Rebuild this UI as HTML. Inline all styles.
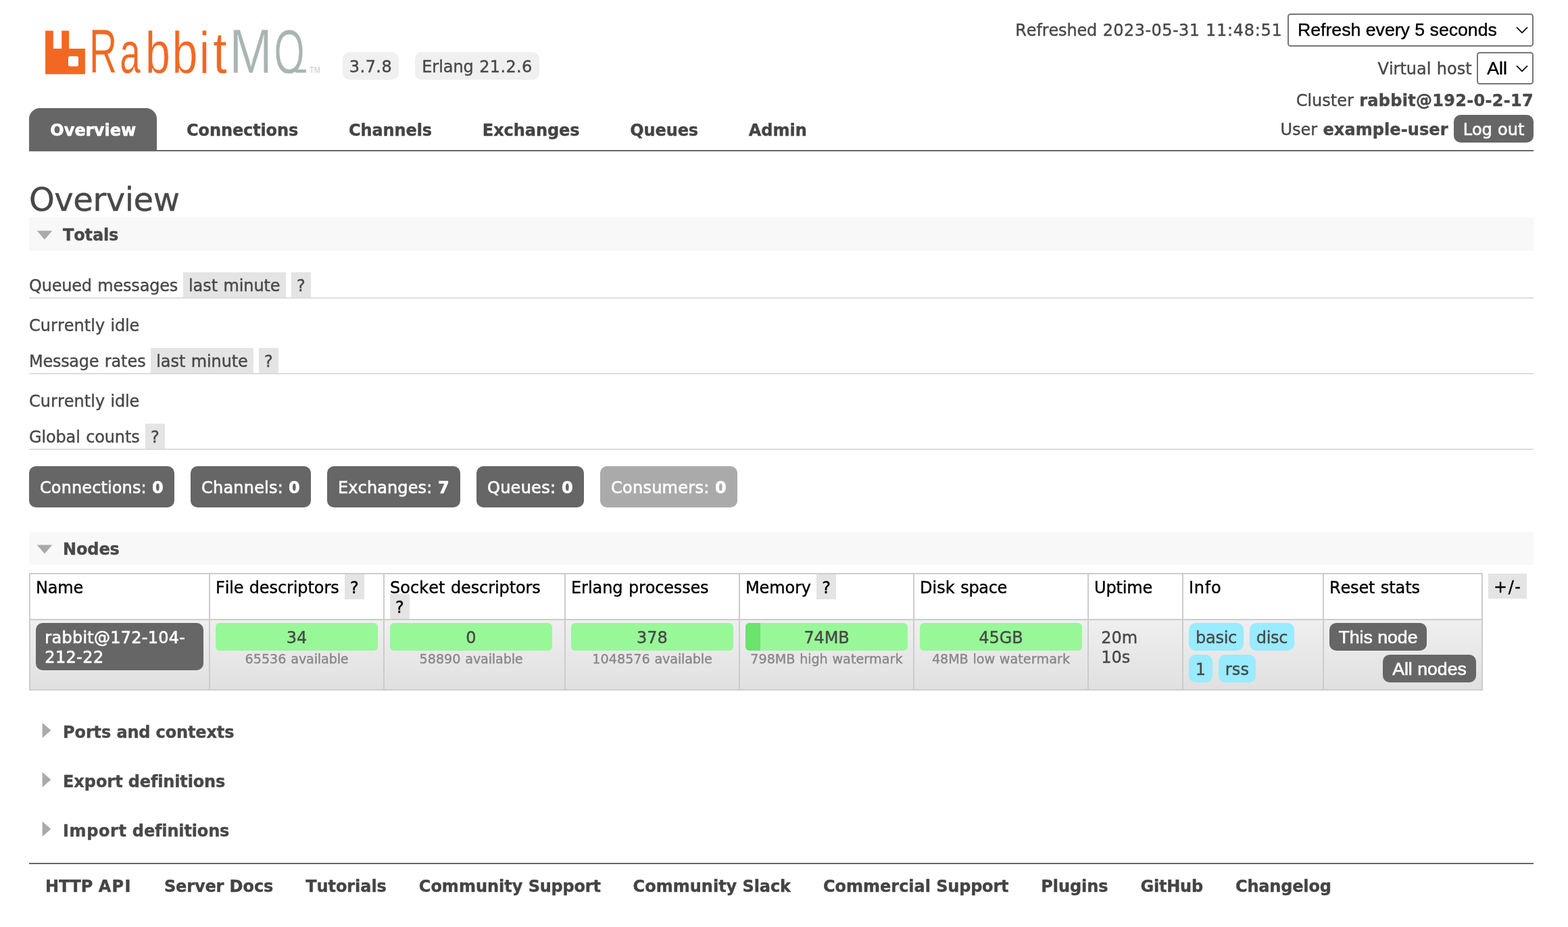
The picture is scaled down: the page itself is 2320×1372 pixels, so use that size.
<!DOCTYPE html>
<html lang="en">
<head>
<meta charset="utf-8">
<title>RabbitMQ Management</title>
<style>
html,body{margin:0;padding:0;background:#fff;}
body{font:24px/30px "DejaVu Sans","Liberation Sans",sans-serif;color:#484848;width:2320px;height:1372px;overflow:hidden;position:relative;will-change:transform;font-kerning:none;font-variant-ligatures:none;}
header,nav,main,footer,section{margin:0;padding:0;display:block;position:static;}
div,span,a,abbr,b,i,svg,h1,h2,h3,p,button{position:absolute;display:block;margin:0;padding:0;border:0;font-size:24px;text-decoration:none;font-style:normal;}
.t{white-space:pre;font-weight:normal;line-height:30px;color:#484848;-webkit-text-stroke:0.400px;}
.b{font-weight:bold;}
.h{font-family:"Liberation Sans",sans-serif;}
.w{color:#fff;-webkit-text-stroke:0.600px;}
.k{color:#000;}
.n{color:#444;}
.g{color:#888;}
.dk{background:#666;border-radius:10px;}
.dis{background:#aaa;}
.tab{background:#666;border-radius:16px 16px 0 0;}
.q{background:#e4e4e4;}
.ln{background:#ddd;}
.hl{background:#666;}
.sec{background:#f8f8f8;}
.ver{background:#f0f0f0;border-radius:10px;}
.tag{background:#99ebff;border-radius:10px;}
.bar{background:#98f898;border-radius:6px;overflow:hidden;}
.bar i{left:0;top:0;width:22px;height:41px;background:#6ae46a;}
.sel{box-sizing:border-box;border:2px solid #767676;border-radius:4.500px;background:#fff;}
.th{background:#fff;}
.row{background:linear-gradient(#efefef,#e0e0e0);}
.bd{background:#ccc;}
#versions,#topnav,#menu{left:0;top:0;}
em{font-style:normal;}
</style>
</head>
<body>
<header>
<svg id="logo" style="left:60px;top:36px" width="430" height="90" viewBox="0 0 430 90" role="img" aria-label="RabbitMQ">
<defs><clipPath id="qc"><rect x="0" y="0" width="430" height="72.8"/></clipPath></defs>
<path d="M7.100 9.500 H18.800 V35.900 H31.200 V9.500 H42.100 V35.900 H65.900 V73.700 H7.100 Z M43.500 47.300 h10 a2.500 2.500 0 0 1 2.500 2.500 v10 a2.500 2.500 0 0 1 -2.500 2.500 h-10 a2.500 2.500 0 0 1 -2.500 -2.500 v-10 a2.500 2.500 0 0 1 2.500 -2.500 Z" fill="#f26822" fill-rule="evenodd"/>
<text clip-path="url(#qc)" font-family="Liberation Sans, sans-serif" stroke="#fff" stroke-width="0.5" y="71.6"><tspan x="71.9" textLength="41.3" lengthAdjust="spacingAndGlyphs" font-size="92.5" fill="#f26822">R</tspan><tspan x="117.2" textLength="30.7" lengthAdjust="spacingAndGlyphs" font-size="87.3" fill="#f26822">a</tspan><tspan x="154.9" textLength="36.9" lengthAdjust="spacingAndGlyphs" font-size="87.3" fill="#f26822">b</tspan><tspan x="194.4" textLength="37.9" lengthAdjust="spacingAndGlyphs" font-size="87.3" fill="#f26822">b</tspan><tspan x="234.8" textLength="15.3" lengthAdjust="spacingAndGlyphs" font-size="87.3" fill="#f26822">i</tspan><tspan x="255.0" textLength="20.7" lengthAdjust="spacingAndGlyphs" font-size="87.3" fill="#f26822">t</tspan><tspan x="279.6" textLength="63.2" lengthAdjust="spacingAndGlyphs" font-size="92.5" fill="#a9b5b2">M</tspan><tspan x="345.5" textLength="45.0" lengthAdjust="spacingAndGlyphs" font-size="92.5" fill="#a9b5b2">Q</tspan></text>
<rect x="377" y="66.8" width="16" height="4.800" fill="#a9b5b2"/>
<text font-family="Liberation Sans, sans-serif" font-size="13.5" fill="#c3cac8" x="398" y="71.6" textLength="16" lengthAdjust="spacingAndGlyphs">TM</text>
</svg>
<div id="versions">
<abbr class="ver" style="left:507px;top:77px;width:83px;height:41px;">
  <span class="t" style="left:9.87px;top:7px;letter-spacing:0.44px;">3.7.8</span>
</abbr>
<abbr class="ver" style="left:614px;top:77px;width:184px;height:41px;">
  <span class="t" style="left:10.23px;top:7px;word-spacing:0.82px;"><em style="letter-spacing:-0.05px">Erlang</em> <em style="letter-spacing:0.36px">21.2.6</em></span>
</abbr>
</div>
<div id="topnav">
<span class="t" style="left:1502.3px;top:30px;word-spacing:0.82px;"><em style="letter-spacing:-0.15px">Refreshed</em> <em style="letter-spacing:0.44px">2023-05-31</em> <em style="letter-spacing:0.7px">11:48:51</em></span>
<div class="sel" style="left:1905px;top:20px;width:364px;height:49px;">
  <span class="t h" style="left:13px;top:6px;font-size:26.67px;line-height:33px;color:#000;">Refresh every 5 seconds</span>
  <svg style="left:334.75px;top:17px" width="20" height="12" viewBox="0 0 20 12"><path d="M2 1.300 L10 9.300 L18 1.300" fill="none" stroke="#111" stroke-width="1.900"/></svg>
</div>
<span class="t" style="left:2038.5px;top:87px;word-spacing:0.82px;"><em style="letter-spacing:-0.01px">Virtual</em> <em style="letter-spacing:-0.02px">host</em></span>
<div class="sel" style="left:2185px;top:77px;width:84px;height:48px;">
  <span class="t h" style="left:13.3px;top:6px;font-size:26.67px;line-height:33px;color:#000;">All</span>
  <svg style="left:54.75px;top:16.5px" width="20" height="12" viewBox="0 0 20 12"><path d="M2 1.300 L10 9.300 L18 1.300" fill="none" stroke="#111" stroke-width="1.900"/></svg>
</div>
<span class="t" style="left:1917.71px;top:134px;letter-spacing:-0.02px;word-spacing:0.85px;">Cluster </span>
<b class="t b" style="left:2011.19px;top:134px;letter-spacing:0.29px;">rabbit@192-0-2-17</b>
<span class="t" style="left:1894.44px;top:177px;letter-spacing:-0.02px;word-spacing:0.84px;">User </span>
<b class="t b" style="left:1957.51px;top:177px;letter-spacing:0.08px;">example-user</b>
<div class="dk" style="left:2151px;top:170px;width:118px;height:41px;">
  <span class="t w" style="left:13.72px;top:7px;word-spacing:0.82px;"><em style="letter-spacing:-0.14px">Log</em> <em style="letter-spacing:-0.03px">out</em></span>
</div>
</div>
<nav id="menu">
<div class="tab" style="left:43px;top:160px;width:189px;height:62px;">
  <a class="t b w" style="left:31.2px;top:18px;letter-spacing:0.08px;">Overview</a>
</div>
<a class="t b n" style="left:276.1px;top:178px;letter-spacing:-0.12px;">Connections</a>
<a class="t b n" style="left:515.95px;top:178px;letter-spacing:-0.1px;">Channels</a>
<a class="t b n" style="left:713.8px;top:178px;letter-spacing:-0.06px;">Exchanges</a>
<a class="t b n" style="left:932.31px;top:178px;letter-spacing:-0.12px;">Queues</a>
<a class="t b n" style="left:1107.79px;top:178px;">Admin</a>
</nav>
<div class="hl" style="left:43px;top:222px;width:2226px;height:2px;"></div>
</header>
<main>
<h1 class="t" style="left:43px;top:265px;letter-spacing:-0.44px;font-size:48px;line-height:60px;">Overview</h1>
<section>
<div class="sec" style="left:43px;top:322px;width:2226px;height:49px;">
  <svg style="left:11px;top:19.2px" width="24" height="14" viewBox="0 0 24 14"><path d="M0.700 0.600 H23.300 L12 13.400 Z" fill="#aaa"/></svg>
  <h2 class="t b" style="left:50px;top:11px;letter-spacing:-0.13px;">Totals</h2>
</div>
<div style="left:43px;top:403px;width:2226px;height:39px;">
  <h3 class="t" style="left:0px;top:5px;word-spacing:0.82px;"><em style="letter-spacing:-0.21px">Queued</em> <em style="letter-spacing:-0.19px">messages</em></h3>
  <div class="q" style="left:228px;top:0px;width:151.5px;height:37px;">
    <span class="t" style="left:8.01px;top:5px;word-spacing:0.82px;"><em style="letter-spacing:-0.08px">last</em> <em style="letter-spacing:-0.1px">minute</em></span>
  </div>
  <div class="q" style="left:388px;top:0px;width:29px;height:37px;">
    <span class="t" style="left:7.96px;top:5px;letter-spacing:0.33px;">?</span>
  </div>
  <div class="ln" style="left:0px;top:37px;width:2226px;height:2px;"></div>
</div>
<p class="t" style="left:43px;top:467px;word-spacing:0.82px;"><em style="letter-spacing:0.02px">Currently</em> <em style="letter-spacing:-0.23px">idle</em></p>
<div style="left:43px;top:515px;width:2226px;height:39px;">
  <h3 class="t" style="left:0px;top:5px;word-spacing:0.82px;"><em style="letter-spacing:-0.28px">Message</em> <em style="letter-spacing:-0.07px">rates</em></h3>
  <div class="q" style="left:180px;top:0px;width:152px;height:37px;">
    <span class="t" style="left:8.26px;top:5px;word-spacing:0.82px;"><em style="letter-spacing:-0.08px">last</em> <em style="letter-spacing:-0.1px">minute</em></span>
  </div>
  <div class="q" style="left:340px;top:0px;width:29px;height:37px;">
    <span class="t" style="left:7.96px;top:5px;letter-spacing:0.33px;">?</span>
  </div>
  <div class="ln" style="left:0px;top:37px;width:2226px;height:2px;"></div>
</div>
<p class="t" style="left:43px;top:579px;word-spacing:0.82px;"><em style="letter-spacing:0.02px">Currently</em> <em style="letter-spacing:-0.23px">idle</em></p>
<div style="left:43px;top:627px;width:2226px;height:39px;">
  <h3 class="t" style="left:0px;top:5px;word-spacing:0.82px;"><em style="letter-spacing:-0.14px">Global</em> <em style="letter-spacing:-0.13px">counts</em></h3>
  <div class="q" style="left:172px;top:0px;width:29px;height:37px;">
    <span class="t" style="left:7.96px;top:5px;letter-spacing:0.33px;">?</span>
  </div>
  <div class="ln" style="left:0px;top:37px;width:2226px;height:2px;"></div>
</div>
<div class="dk" style="left:43px;top:690px;width:215px;height:61px;">
  <span class="t w" style="left:16px;top:17px;letter-spacing:0.11px;word-spacing:0.71px;">Connections: </span>
  <b class="t b w" style="left:181.94px;top:17px;letter-spacing:0.36px;">0</b>
</div>
<div class="dk" style="left:282px;top:690px;width:178px;height:61px;">
  <span class="t w" style="left:16px;top:17px;letter-spacing:0.21px;word-spacing:0.61px;">Channels: </span>
  <b class="t b w" style="left:144.94px;top:17px;letter-spacing:0.36px;">0</b>
</div>
<div class="dk" style="left:484px;top:690px;width:197px;height:61px;">
  <span class="t w" style="left:16px;top:17px;letter-spacing:0.11px;word-spacing:0.72px;">Exchanges: </span>
  <b class="t b w" style="left:163.94px;top:17px;letter-spacing:0.36px;">7</b>
</div>
<div class="dk" style="left:705px;top:690px;width:159px;height:61px;">
  <span class="t w" style="left:16px;top:17px;letter-spacing:0.26px;word-spacing:0.56px;">Queues: </span>
  <b class="t b w" style="left:125.94px;top:17px;letter-spacing:0.36px;">0</b>
</div>
<div class="dk dis" style="left:888px;top:690px;width:203px;height:61px;">
  <span class="t w" style="left:16px;top:17px;letter-spacing:0.25px;word-spacing:0.57px;">Consumers: </span>
  <b class="t b w" style="left:169.94px;top:17px;letter-spacing:0.36px;">0</b>
</div>
</section>
<section>
<div class="sec" style="left:43px;top:787px;width:2226px;height:49px;">
  <svg style="left:11px;top:19.2px" width="24" height="14" viewBox="0 0 24 14"><path d="M0.700 0.600 H23.300 L12 13.400 Z" fill="#aaa"/></svg>
  <h2 class="t b" style="left:50px;top:11px;letter-spacing:-0.11px;">Nodes</h2>
</div>
<div id="nodes" style="left:43px;top:848px;width:2151px;height:174px;">
  <div class="th" style="left:0px;top:0px;width:2151px;height:70px;"></div>
  <div class="row" style="left:0px;top:70px;width:2151px;height:104px;"></div>
  <div class="bd" style="left:0px;top:0px;width:2px;height:174px;"></div>
  <div class="bd" style="left:266px;top:0px;width:2px;height:174px;"></div>
  <div class="bd" style="left:524px;top:0px;width:2px;height:174px;"></div>
  <div class="bd" style="left:792px;top:0px;width:2px;height:174px;"></div>
  <div class="bd" style="left:1050px;top:0px;width:2px;height:174px;"></div>
  <div class="bd" style="left:1308px;top:0px;width:2px;height:174px;"></div>
  <div class="bd" style="left:1566px;top:0px;width:2px;height:174px;"></div>
  <div class="bd" style="left:1706px;top:0px;width:2px;height:174px;"></div>
  <div class="bd" style="left:1914px;top:0px;width:2px;height:174px;"></div>
  <div class="bd" style="left:2149px;top:0px;width:2px;height:174px;"></div>
  <div class="bd" style="left:0px;top:0px;width:2151px;height:2px;"></div>
  <div class="bd" style="left:0px;top:68px;width:2151px;height:2px;"></div>
  <div class="bd" style="left:0px;top:172px;width:2151px;height:2px;"></div>
  <span class="t k" style="left:10px;top:7px;letter-spacing:-0.2px;">Name</span>
  <span class="t k" style="left:276px;top:7px;word-spacing:0.82px;"><em style="letter-spacing:-0.16px">File</em> <em style="letter-spacing:-0.1px">descriptors</em></span>
  <span class="t k" style="left:534px;top:7px;word-spacing:0.82px;"><em style="letter-spacing:0.04px">Socket</em> <em style="letter-spacing:-0.1px">descriptors</em></span>
  <span class="t k" style="left:802px;top:7px;word-spacing:0.82px;"><em style="letter-spacing:-0.05px">Erlang</em> <em style="letter-spacing:-0.18px">processes</em></span>
  <span class="t k" style="left:1060px;top:7px;letter-spacing:-0.12px;">Memory</span>
  <span class="t k" style="left:1318px;top:7px;word-spacing:0.82px;"><em style="letter-spacing:0.06px">Disk</em> <em style="letter-spacing:-0.34px">space</em></span>
  <span class="t k" style="left:1576px;top:7px;letter-spacing:-0.14px;">Uptime</span>
  <span class="t k" style="left:1716px;top:7px;letter-spacing:0.72px;">Info</span>
  <span class="t k" style="left:1924px;top:7px;word-spacing:0.82px;"><em style="letter-spacing:-0.18px">Reset</em> <em style="letter-spacing:-0.04px">stats</em></span>
  <div class="q" style="left:466.97px;top:2px;width:29.08px;height:37px;">
    <span class="t k" style="left:8px;top:5px;letter-spacing:0.33px;">?</span>
  </div>
  <div class="q" style="left:534px;top:31px;width:29.08px;height:37px;">
    <span class="t k" style="left:8px;top:5px;letter-spacing:0.33px;">?</span>
  </div>
  <div class="q" style="left:1165.36px;top:2px;width:29.08px;height:37px;">
    <span class="t k" style="left:8px;top:5px;letter-spacing:0.33px;">?</span>
  </div>
  <div class="dk" style="left:10px;top:74px;width:248px;height:70px;">
    <span class="t w" style="left:13.3px;top:7px;letter-spacing:0.26px;">rabbit@172-104-</span>
    <span class="t w" style="left:13.3px;top:36px;letter-spacing:0.37px;">212-22</span>
  </div>
  <div class="bar" style="left:276px;top:74px;width:240px;height:41px;">
    <span class="t" style="left:104.74px;top:7px;letter-spacing:-0.01px;">34</span>
  </div>
  <span class="t g" style="left:319.51px;top:116px;word-spacing:0.66px;font-size:19.2px;line-height:24px;">65536 <em style="letter-spacing:-0.16px">available</em></span>
  <div class="bar" style="left:534px;top:74px;width:240px;height:41px;">
    <span class="t" style="left:112.37px;top:7px;letter-spacing:-0.02px;">0</span>
  </div>
  <span class="t g" style="left:577.51px;top:116px;word-spacing:0.66px;font-size:19.2px;line-height:24px;">58890 <em style="letter-spacing:-0.16px">available</em></span>
  <div class="bar" style="left:802px;top:74px;width:240px;height:41px;">
    <span class="t" style="left:97.1px;top:7px;letter-spacing:-0.01px;">378</span>
  </div>
  <span class="t g" style="left:833.3px;top:116px;word-spacing:0.66px;font-size:19.2px;line-height:24px;">1048576 <em style="letter-spacing:-0.16px">available</em></span>
  <div class="bar" style="left:1060px;top:74px;width:240px;height:41px;">
    <i></i>
    <span class="t" style="left:86.39px;top:7px;letter-spacing:-0.12px;">74MB</span>
  </div>
  <span class="t g" style="left:1067.36px;top:116px;word-spacing:0.66px;font-size:19.2px;line-height:24px;"><em style="letter-spacing:-0.07px">798MB</em> <em style="letter-spacing:-0.08px">high</em> <em style="letter-spacing:0.01px">watermark</em></span>
  <div class="bar" style="left:1318px;top:74px;width:240px;height:41px;">
    <span class="t" style="left:87.2px;top:7px;letter-spacing:0px;">45GB</span>
  </div>
  <span class="t g" style="left:1335.92px;top:116px;word-spacing:0.66px;font-size:19.2px;line-height:24px;"><em style="letter-spacing:-0.09px">48MB</em> <em style="letter-spacing:-0.05px">low</em> <em style="letter-spacing:0.01px">watermark</em></span>
  <span class="t" style="left:1586.2px;top:81px;letter-spacing:-0.01px;">20m</span>
  <span class="t" style="left:1586.2px;top:110px;letter-spacing:0px;">10s</span>
  <abbr class="tag" style="left:1716px;top:74px;width:81px;height:41px;">
    <span class="t" style="left:10.02px;top:7px;letter-spacing:-0.27px;">basic</span>
  </abbr>
  <abbr class="tag" style="left:1806px;top:74px;width:66px;height:41px;">
    <span class="t" style="left:9.73px;top:7px;letter-spacing:-0.27px;">disc</span>
  </abbr>
  <abbr class="tag" style="left:1716px;top:121px;width:35px;height:41px;">
    <span class="t" style="left:9.87px;top:7px;letter-spacing:-0.02px;">1</span>
  </abbr>
  <abbr class="tag" style="left:1760px;top:121px;width:55px;height:41px;">
    <span class="t" style="left:9.87px;top:7px;letter-spacing:0.13px;">rss</span>
  </abbr>
  <div class="dk" style="left:1924px;top:74px;width:144px;height:41px;">
    <span class="t h w" style="left:13.46px;top:5px;font-size:26.67px;line-height:33px;">This node</span>
  </div>
  <div class="dk" style="left:2003px;top:121px;width:138px;height:41px;">
    <span class="t h w" style="left:14.16px;top:5px;font-size:26.67px;line-height:33px;">All nodes</span>
  </div>
</div>
<div class="q" style="left:2202px;top:849px;width:57.42px;height:37px;">
  <span class="t k" style="left:8px;top:5px;letter-spacing:1.52px;">+/-</span>
</div>
</section>
<section>
<div style="left:43px;top:1058px;width:2226px;height:49px;">
  <svg style="left:19px;top:11.2px" width="14" height="24" viewBox="0 0 14 24"><path d="M0.600 0.700 V23.300 L13.400 12 Z" fill="#aaa"/></svg>
  <h2 class="t b" style="left:50px;top:11px;word-spacing:-0.15px;"><em style="letter-spacing:-0.1px">Ports</em> <em style="letter-spacing:-0.19px">and</em> <em style="letter-spacing:-0.12px">contexts</em></h2>
</div>
</section>
<section>
<div style="left:43px;top:1131px;width:2226px;height:49px;">
  <svg style="left:19px;top:11.2px" width="14" height="24" viewBox="0 0 14 24"><path d="M0.600 0.700 V23.300 L13.400 12 Z" fill="#aaa"/></svg>
  <h2 class="t b" style="left:50px;top:11px;word-spacing:-0.15px;"><em style="letter-spacing:-0.05px">Export</em> <em style="letter-spacing:-0.15px">definitions</em></h2>
</div>
</section>
<section>
<div style="left:43px;top:1204px;width:2226px;height:49px;">
  <svg style="left:19px;top:11.2px" width="14" height="24" viewBox="0 0 14 24"><path d="M0.600 0.700 V23.300 L13.400 12 Z" fill="#aaa"/></svg>
  <h2 class="t b" style="left:50px;top:11px;word-spacing:-0.15px;"><em style="letter-spacing:0.62px">Import</em> <em style="letter-spacing:-0.15px">definitions</em></h2>
</div>
</section>
</main>
<footer>
<div class="hl" style="left:43px;top:1277px;width:2226px;height:2px;"></div>
<a class="t b n" style="left:67px;top:1297px;word-spacing:-0.15px;">HTTP <em style="letter-spacing:1.41px">API</em></a>
<a class="t b n" style="left:242.94px;top:1297px;word-spacing:-0.15px;"><em style="letter-spacing:-0.13px">Server</em> <em style="letter-spacing:-0.04px">Docs</em></a>
<a class="t b n" style="left:452.27px;top:1297px;letter-spacing:-0.08px;">Tutorials</a>
<a class="t b n" style="left:619.77px;top:1297px;word-spacing:-0.15px;"><em style="letter-spacing:0px">Community</em> <em style="letter-spacing:-0.21px">Support</em></a>
<a class="t b n" style="left:936.62px;top:1297px;word-spacing:-0.15px;"><em style="letter-spacing:0px">Community</em> <em style="letter-spacing:-0.08px">Slack</em></a>
<a class="t b n" style="left:1217.92px;top:1297px;word-spacing:-0.15px;">Commercial <em style="letter-spacing:-0.21px">Support</em></a>
<a class="t b n" style="left:1540.24px;top:1297px;letter-spacing:-0.07px;">Plugins</a>
<a class="t b n" style="left:1687.43px;top:1297px;letter-spacing:-0.2px;">GitHub</a>
<a class="t b n" style="left:1828px;top:1297px;letter-spacing:-0.18px;">Changelog</a>
</footer>
</body>
</html>
